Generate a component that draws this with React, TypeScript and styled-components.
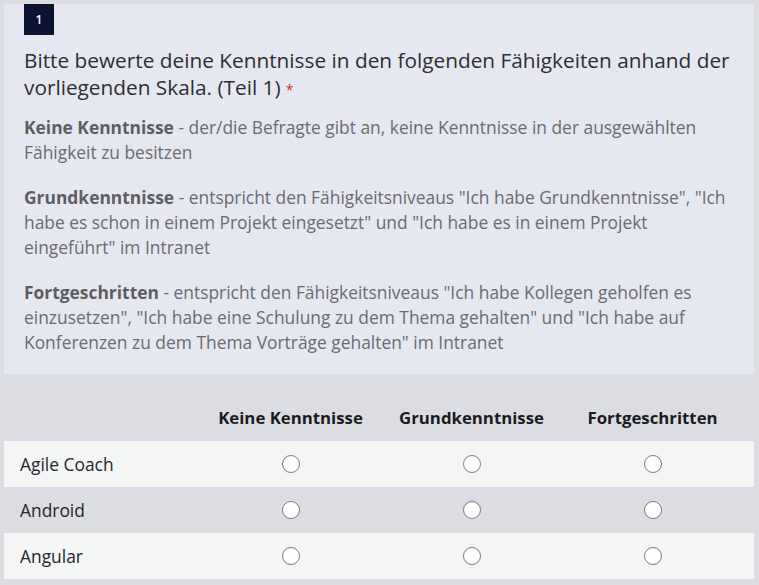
import React from "react";
import styled, { createGlobalStyle } from "styled-components";

const Global = createGlobalStyle`
  html, body { margin: 0; padding: 0; }
  body {
    background: #dcdde3;
    font-family: "Open Sans", "Noto Sans", sans-serif;
  }
`;

const Page = styled.div`
  padding: 4px 5px 6px 4px;
  display: flex;
  flex-direction: column;
`;

const Card = styled.section`
  background: #e6e8f1;
  padding: 0 20px 19px 20px;
  display: flex;
  flex-direction: column;
`;

const Badge = styled.div`
  width: 30px;
  height: 31px;
  background: #0c1330;
  color: #fff;
  font-size: 12px;
  font-weight: 600;
  display: flex;
  align-items: center;
  justify-content: center;
`;

const Title = styled.h1`
  margin: 12px 0 0 0;
  font-size: 20.8px;
  font-weight: 400;
  line-height: 27px;
  color: #2e2e33;
`;

const Star = styled.span`
  color: #d0312d;
  font-size: 14px;
  margin-left: 5px;
`;

const Para = styled.p<{ $first?: boolean }>`
  margin: ${(p) => (p.$first ? "12px" : "20px")} 0 0 0;
  font-size: 17.4px;
  line-height: 25px;
  color: #6b6b70;
  b { font-weight: 700; color: #5e5e62; }
`;

const Table = styled.div`
  display: flex;
  flex-direction: column;
`;

const Row = styled.div<{ $light?: boolean; $head?: boolean }>`
  display: grid;
  grid-template-columns: 196px 181px 181px 181px 1fr;
  align-items: ${(p) => (p.$head ? "end" : "center")};
  height: ${(p) => (p.$head ? "67px" : "46px")};
  padding-bottom: ${(p) => (p.$head ? "12px" : "0")};
  box-sizing: border-box;
  background: ${(p) => (p.$light ? "#f4f6f6" : "transparent")};
`;

const HeadCell = styled.div`
  text-align: center;
  font-weight: 700;
  font-size: 16.8px;
  line-height: 23px;
  color: #1b1b1f;
`;

const Label = styled.div`
  padding-left: 16px;
  font-size: 17.4px;
  color: #25252a;
`;

const RadioCell = styled.div`
  display: flex;
  justify-content: center;
`;

const Radio = styled.span`
  width: 16px;
  height: 16px;
  border-radius: 50%;
  border: 1px solid #7a7a7a;
  background: #fff;
`;

const skills = ["Agile Coach", "Android", "Angular"];
const levels = ["Keine Kenntnisse", "Grundkenntnisse", "Fortgeschritten"];

export default function App() {
  return (
    <>
      <Global />
      <Page>
        <Card>
          <Badge>1</Badge>
          <Title>
            Bitte bewerte deine Kenntnisse in den folgenden Fähigkeiten anhand der
            vorliegenden Skala. (Teil 1)<Star>*</Star>
          </Title>
          <Para $first>
            <b>Keine Kenntnisse</b> - der/die Befragte gibt an, keine Kenntnisse in der
            ausgewählten Fähigkeit zu besitzen
          </Para>
          <Para>
            <b>Grundkenntnisse</b> - entspricht den Fähigkeitsniveaus "Ich habe
            Grundkenntnisse", "Ich habe es schon in einem Projekt eingesetzt" und "Ich
            habe es in einem Projekt eingeführt" im Intranet
          </Para>
          <Para>
            <b>Fortgeschritten</b> - entspricht den Fähigkeitsniveaus "Ich habe Kollegen
            geholfen es einzusetzen", "Ich habe eine Schulung zu dem Thema gehalten" und
            "Ich habe auf Konferenzen zu dem Thema Vorträge gehalten" im Intranet
          </Para>
        </Card>
        <Table>
          <Row $head>
            <div />
            {levels.map((l) => (
              <HeadCell key={l}>{l}</HeadCell>
            ))}
          </Row>
          {skills.map((s, i) => (
            <Row key={s} $light={i % 2 === 0}>
              <Label>{s}</Label>
              {levels.map((l) => (
                <RadioCell key={l}>
                  <Radio />
                </RadioCell>
              ))}
            </Row>
          ))}
        </Table>
      </Page>
    </>
  );
}
